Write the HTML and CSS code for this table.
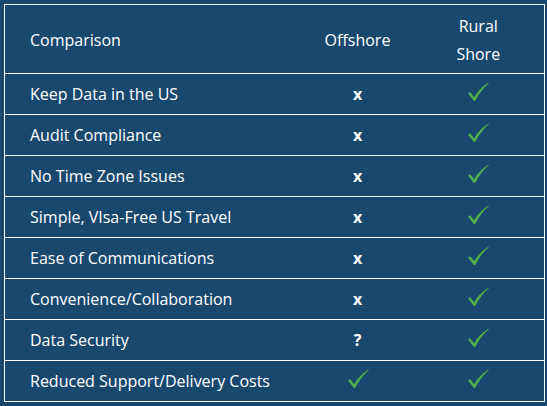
FILE: index.html
```html
<!DOCTYPE html>
<html>
<head>
<meta charset="utf-8">
<link rel="stylesheet" href="styles.css">
</head>
<body>
<svg width="0" height="0" class="defs">
  <defs>
    <symbol id="chk" viewBox="0 0 22 20">
      <path d="M1 11.5 L3.2 10.2 L7.2 15.2 C10.5 9.5 15 4.5 21.5 0.5 L21.8 1.2 C16 6 12 11.5 8.2 19 L6.8 19 Z"/>
    </symbol>
  </defs>
</svg>
<table class="cmp">
  <colgroup>
    <col class="w1"><col class="w2"><col class="w3">
  </colgroup>
  <thead>
    <tr>
      <th class="c1">Comparison</th>
      <th class="c2">Offshore</th>
      <th class="c3">Rural Shore</th>
    </tr>
  </thead>
  <tbody>
    <tr><td class="c1">Keep Data in the US</td><td class="c2 mark">x</td><td class="c3"><svg class="ok"><use href="#chk"/></svg></td></tr>
    <tr><td class="c1">Audit Compliance</td><td class="c2 mark">x</td><td class="c3"><svg class="ok"><use href="#chk"/></svg></td></tr>
    <tr><td class="c1">No Time Zone Issues</td><td class="c2 mark">x</td><td class="c3"><svg class="ok"><use href="#chk"/></svg></td></tr>
    <tr><td class="c1">Simple, VIsa-Free US Travel</td><td class="c2 mark">x</td><td class="c3"><svg class="ok"><use href="#chk"/></svg></td></tr>
    <tr><td class="c1">Ease of Communications</td><td class="c2 mark">x</td><td class="c3"><svg class="ok"><use href="#chk"/></svg></td></tr>
    <tr><td class="c1">Convenience/Collaboration</td><td class="c2 mark">x</td><td class="c3"><svg class="ok"><use href="#chk"/></svg></td></tr>
    <tr><td class="c1">Data Security</td><td class="c2 mark">?</td><td class="c3"><svg class="ok"><use href="#chk"/></svg></td></tr>
    <tr><td class="c1">Reduced Support/Delivery Costs</td><td class="c2"><svg class="ok"><use href="#chk"/></svg></td><td class="c3"><svg class="ok"><use href="#chk"/></svg></td></tr>
  </tbody>
</table>
</body>
</html>
```
FILE: styles.css
```css
html, body {
  margin: 0;
  padding: 0;
  background: #19486f;
}
body {
  padding: 4px 0 0 4px;
  font-family: "Open Sans", "Noto Sans", sans-serif;
  color: #ffffff;
}
.defs {
  position: absolute;
  width: 0;
  height: 0;
}
.cmp {
  border-collapse: collapse;
  width: 540px;
  table-layout: fixed;
  border: 1px solid #ffffff;
  font-size: 16px;
}
.w1 { width: 298px; }
.w2 { width: 110px; }
.w3 { width: 132px; }
.cmp th, .cmp td {
  padding: 0;
  font-weight: normal;
  vertical-align: middle;
}
.cmp th {
  height: 69px;
  line-height: 28px;
  padding-top: 2px;
  padding-bottom: 0;
  box-sizing: border-box;
}
.cmp td {
  height: 41px;
  box-sizing: border-box;
  border-top: 1px solid #ffffff;
}
.cmp .c1 {
  text-align: left;
  padding-left: 25px;
}
.cmp .c2 {
  text-align: center;
}
.cmp .c3 {
  text-align: center;
  padding-left: 24px;
  padding-right: 24px;
}
.cmp .mark {
  font-weight: bold;
}
.ok {
  width: 22px;
  height: 20px;
  fill: #4fae4a;
  display: inline-block;
  vertical-align: middle;
  margin-top: -8px;
}
```
